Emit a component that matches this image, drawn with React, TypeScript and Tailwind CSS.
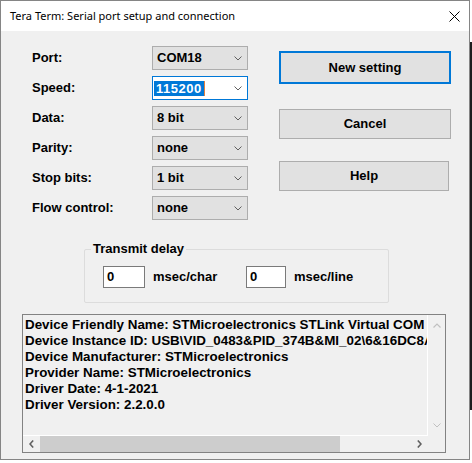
import React from "react";

const F = { fontFamily: '"Liberation Sans", Arial, sans-serif' };

function Chevron({ color = "#606060" }: { color?: string }) {
  return (
    <svg width="8" height="5" viewBox="0 0 8 5" className="block">
      <path d="M0.5 0.5 L4 4 L7.5 0.5" fill="none" stroke={color} strokeWidth="1" />
    </svg>
  );
}

function Combo({ value, active = false }: { value: string; active?: boolean }) {
  if (active) {
    return (
      <div className="w-[96px] h-[24px] border border-[#0078d7] bg-white flex items-center justify-between pl-[1px] pr-[5px]">
        <div className="flex items-center">
          <span className="bg-[#0078d7] text-white h-[15px] leading-[15px] px-[2px] text-[13px] font-bold tracking-[0.5px]">{value}</span>
          <span className="w-px h-[15px] bg-[#e08040]" />
        </div>
        <Chevron />
      </div>
    );
  }
  return (
    <div className="w-[96px] h-[24px] border border-[#adadad] bg-[#e1e1e1] flex items-center justify-between pl-[4px] pr-[5px]">
      <span className="text-[13px] font-bold text-black">{value}</span>
      <Chevron />
    </div>
  );
}

function Btn({ label, primary = false, w = "w-[172px]", h = "h-[30px]" }: { label: string; primary?: boolean; w?: string; h?: string }) {
  return (
    <div
      className={`${w} ${h} bg-[#e1e1e1] flex items-center justify-center text-[13px] font-bold text-black ${
        primary ? "border-2 border-[#0078d7]" : "border border-[#adadad]"
      }`}
    >
      {label}
    </div>
  );
}

const rows: [string, string, boolean][] = [
  ["Port:", "COM18", false],
  ["Speed:", "115200", true],
  ["Data:", "8 bit", false],
  ["Parity:", "none", false],
  ["Stop bits:", "1 bit", false],
  ["Flow control:", "none", false],
];

const lines = [
  "Device Friendly Name: STMicroelectronics STLink Virtual COM Port (COM18)",
  "Device Instance ID: USB\\VID_0483&PID_374B&MI_02\\6&16DC8A4F&0&0002",
  "Device Manufacturer: STMicroelectronics",
  "Provider Name: STMicroelectronics",
  "Driver Date: 4-1-2021",
  "Driver Version: 2.2.0.0",
];

export default function App() {
  return (
    <div className="w-[472px] h-[463px] relative bg-white overflow-hidden" style={F}>
      <div className="absolute right-0 top-[42px] w-[2px] h-[368px] bg-[#1e1e1e]" />
      <div className="w-[470px] h-[460px] border border-[#858585] bg-[#f0f0f0] flex flex-col">
        {/* Title bar */}
        <div className="h-[30px] bg-white flex items-center justify-between pl-[9px] pr-[9px] shrink-0">
          <span
            className="text-[11px] text-black pt-[1px]"
            style={{ fontFamily: '"Noto Sans", "Open Sans", sans-serif' }}
          >
            Tera Term: Serial port setup and connection
          </span>
          <svg width="11" height="11" viewBox="0 0 11 11" className="block">
            <path d="M0.5 0.5 L10.5 10.5 M10.5 0.5 L0.5 10.5" stroke="#000" strokeWidth="1" />
          </svg>
        </div>

        {/* Body */}
        <div className="flex flex-col">
          <div className="flex pt-[15px] pl-[31px]">
            <div className="flex flex-col gap-[6px]">
              {rows.map(([l, v, a]) => (
                <div key={l} className="flex items-center h-[24px]">
                  <span className="w-[120px] text-[13px] font-bold text-black">{l}</span>
                  <Combo value={v} active={a} />
                </div>
              ))}
            </div>
            <div className="flex flex-col ml-[31px] pt-[5px]">
              <Btn label="New setting" primary h="h-[33px]" />
              <div className="mt-[25px]">
                <Btn label="Cancel" />
              </div>
              <div className="mt-[22px]">
                <Btn label="Help" w="w-[170px]" />
              </div>
            </div>
          </div>

          {/* Transmit delay group */}
          <div className="relative ml-[83px] mt-[29px] w-[305px] h-[54px] border border-[#dcdcdc] rounded-[2px]">
            <span className="absolute left-[6px] top-[-9px] bg-[#f0f0f0] px-[2px] text-[13px] font-bold text-black leading-[16px]">
              Transmit delay
            </span>
            <div className="flex items-center pt-[16px] pl-[18px]">
              <div className="w-[42px] h-[22px] bg-white border border-[#7a7a7a] flex items-center pl-[3px] text-[13px] font-bold">
                0
              </div>
              <span className="ml-[8px] w-[93px] text-[13px] font-bold text-black">msec/char</span>
              <div className="w-[40px] h-[22px] bg-white border border-[#7a7a7a] flex items-center pl-[3px] text-[13px] font-bold">
                0
              </div>
              <span className="ml-[8px] text-[13px] font-bold text-black">msec/line</span>
            </div>
          </div>

          {/* Listbox */}
          <div className="ml-[21px] mt-[11px] w-[424px] border border-[#828282] grid grid-cols-[405px_17px] grid-rows-[121px_16px]">
            <div className="border-r border-b border-white overflow-hidden pt-[2px] pl-[2px]">
              {lines.map((t) => (
                <div key={t} className="whitespace-nowrap text-[13.4px] font-bold leading-[16px] text-black">
                  {t}
                </div>
              ))}
            </div>
            <div className="flex flex-col items-center justify-between pt-[8px] pb-[8px]">
              <svg width="8" height="5" viewBox="0 0 8 5" className="block">
                <path d="M0.5 4.5 L4 1 L7.5 4.5" fill="none" stroke="#c0c0c0" strokeWidth="1.2" />
              </svg>
              <Chevron color="#c0c0c0" />
            </div>
            <div className="flex items-center">
              <div className="w-[17px] h-full flex items-center justify-center">
                <svg width="5" height="8" viewBox="0 0 5 8" className="block">
                  <path d="M4.2 0.5 L1 4 L4.2 7.5" fill="none" stroke="#606060" strokeWidth="1.6" />
                </svg>
              </div>
              <div className="flex-1 h-full">
                <div className="w-[300px] h-full bg-[#cdcdcd]" />
              </div>
              <div className="w-[17px] h-full flex items-center justify-center">
                <svg width="5" height="8" viewBox="0 0 5 8" className="block">
                  <path d="M0.8 0.5 L4 4 L0.8 7.5" fill="none" stroke="#606060" strokeWidth="1.6" />
                </svg>
              </div>
            </div>
            <div />
          </div>
        </div>
      </div>
    </div>
  );
}
